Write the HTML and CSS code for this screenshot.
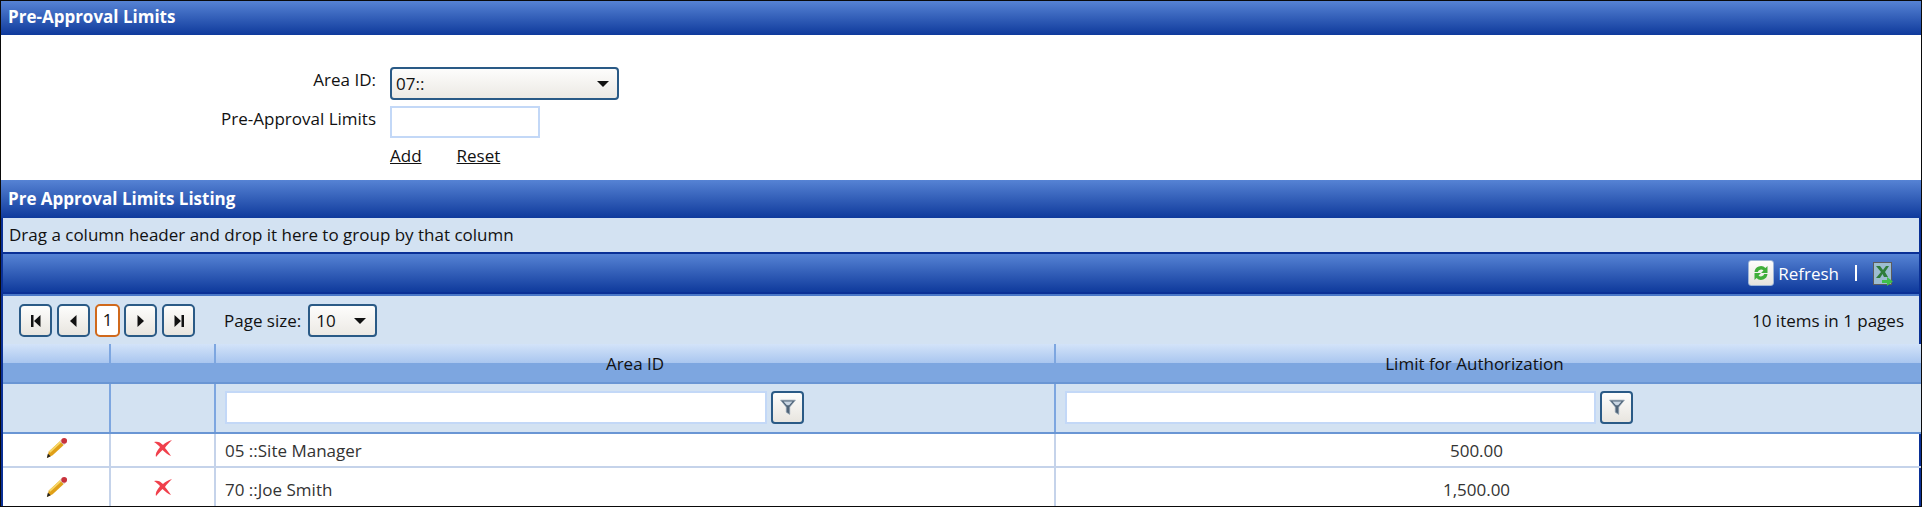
FILE: index.html
```html
<!DOCTYPE html>
<html lang="en">

<head>
    <meta charset="UTF-8">
    <title>Pre-Approval Limits</title>
    <link rel="stylesheet" href="styles.css">
</head>

<body>
    <div class="page-frame">
        <div class="title-bar">Pre-Approval Limits</div>

        <!-- Entry form -->
        <div class="limit-form">
            <label class="form-label form-label-area">Area ID:</label>
            <div class="fake-select form-select">
                <span>07::</span>
                <span class="select-arrow"></span>
            </div>
            <label class="form-label">Pre-Approval Limits</label>
            <input type="text" class="limit-input">
            <div class="form-links">
                <a href="#">Add</a>
                <a href="#">Reset</a>
            </div>
        </div>

        <div class="title-bar title-bar-listing">Pre Approval Limits Listing</div>

        <!-- Grid -->
        <div class="grid-wrap">
            <div class="group-panel">Drag a column header and drop it here to group by that column</div>
            <div class="grid-toolbar">
                <span class="refresh-icon">
                    <svg width="22" height="22" viewBox="0 0 22 22">
                        <path d="M4.500 10 A6.500 6.500 0 0 1 15.500 6 L17.500 4 V11 H11 L13.500 8.600 A3.400 3.400 0 0 0 7.800 10 Z" fill="#3fae3a"/>
                        <path d="M17.500 12 A6.500 6.500 0 0 1 6.500 16 L4.500 18 V11 H11 L8.500 13.400 A3.400 3.400 0 0 0 14.200 12 Z" fill="#3fae3a"/>
                    </svg>
                </span>
                <span class="refresh-text">Refresh</span>
                <span class="toolbar-sep"></span>
                <svg class="excel-icon" width="20" height="24" viewBox="0 0 20 24">
                    <rect x="0.500" y="0.500" width="18" height="22" fill="#9dbdd0" stroke="#5c5c5c"/>
                    <path d="M3 4 H7 L10 8 L13 4 H16 L12 10 L15 15 H11 L9.500 12 L7 16 H3 L8 10 Z" fill="#2f7d3a"/>
                    <path d="M9 18 H14 V15 L20 19.500 L14 24 V21 H9 Z" fill="#3fbf4a"/>
                </svg>
            </div>
            <div class="pager-row">
                <div class="pager-left">
                    <button class="pager-btn"><svg width="10" height="12" viewBox="0 0 10 12"><path d="M0 0H2.500V12H0Z M9.500 0V12L3 6Z" fill="#111"/></svg></button>
                    <button class="pager-btn"><svg width="7" height="12" viewBox="0 0 7 12"><path d="M6.500 0V12L0 6Z" fill="#111"/></svg></button>
                    <span class="pager-current">1</span>
                    <button class="pager-btn"><svg width="7" height="12" viewBox="0 0 7 12"><path d="M0.500 0V12L7 6Z" fill="#111"/></svg></button>
                    <button class="pager-btn"><svg width="10" height="12" viewBox="0 0 10 12"><path d="M0.500 0V12L7 6Z M7.500 0H10V12H7.500Z" fill="#111"/></svg></button>
                    <span class="page-size-label">Page size:</span>
                    <div class="fake-select page-size-select">
                        <span>10</span>
                        <span class="select-arrow"></span>
                    </div>
                </div>
                <div class="pager-info">10 items in 1 pages</div>
            </div>

            <table class="limits-table">
                <colgroup>
                    <col class="col-first">
                    <col class="col-action">
                    <col class="col-area">
                    <col>
                </colgroup>
                <thead>
                    <tr class="header-row">
                        <th></th>
                        <th></th>
                        <th>Area ID</th>
                        <th>Limit for Authorization</th>
                    </tr>
                    <tr class="filter-row">
                        <td></td>
                        <td></td>
                        <td>
                            <div class="filter-cell">
                                <input type="text" class="filter-input">
                                <button class="filter-btn"><svg width="16" height="16" viewBox="0 0 14 14"><path d="M0.500 1H13.500L8.500 7V13.500L5.500 11.500V7Z" fill="#4f6478" stroke="#8ea0b2" stroke-width="0.6"/><path d="M3 2.200H11L8 5.500H6Z" fill="#c9d6e3"/></svg></button>
                            </div>
                        </td>
                        <td>
                            <div class="filter-cell">
                                <input type="text" class="filter-input filter-input-limit">
                                <button class="filter-btn"><svg width="16" height="16" viewBox="0 0 14 14"><path d="M0.500 1H13.500L8.500 7V13.500L5.500 11.500V7Z" fill="#4f6478" stroke="#8ea0b2" stroke-width="0.6"/><path d="M3 2.200H11L8 5.500H6Z" fill="#c9d6e3"/></svg></button>
                            </div>
                        </td>
                    </tr>
                </thead>
                <tbody>
                    <tr class="row-first">
                        <td class="icon-cell">
                            <svg class="pencil-icon" width="23" height="23" viewBox="0 0 24 24">
                                <path d="M2 22 L4 15 L17 3 L21 7 L8 19 Z" fill="#e0a018"/>
                                <path d="M4 15 L17 3 L18.500 4.500 L5.500 16.500 Z" fill="#f7d768"/>
                                <path d="M2 22 L3 17.500 L6 20 Z" fill="#222"/>
                                <path d="M15.500 4.500 L17.500 2.500 L21.500 6.500 L19.500 8.500 Z" fill="#ddd"/>
                                <circle cx="20" cy="4" r="3" fill="#c8323c"/>
                            </svg>
                        </td>
                        <td class="icon-cell">
                            <svg class="delete-icon" width="20" height="20" viewBox="0 0 20 20">
                                <path d="M1 4 C5 3 7 4 10 7 C12 5 15 3 19 2 C16 5 13 8 12 10 C14 12 16 15 18 18 C15 17 12 14 9.500 12 C7 14 5 17 3 19 C2 15 5 12 7 9 C5 7 3 5 1 4 Z" fill="#f0404c"/>
                            </svg>
                        </td>
                        <td>05 ::Site Manager</td>
                        <td class="amount-cell">500.00</td>
                    </tr>
                    <tr class="row-second">
                        <td class="icon-cell">
                            <svg class="pencil-icon" width="23" height="23" viewBox="0 0 24 24">
                                <path d="M2 22 L4 15 L17 3 L21 7 L8 19 Z" fill="#e0a018"/>
                                <path d="M4 15 L17 3 L18.500 4.500 L5.500 16.500 Z" fill="#f7d768"/>
                                <path d="M2 22 L3 17.500 L6 20 Z" fill="#222"/>
                                <path d="M15.500 4.500 L17.500 2.500 L21.500 6.500 L19.500 8.500 Z" fill="#ddd"/>
                                <circle cx="20" cy="4" r="3" fill="#c8323c"/>
                            </svg>
                        </td>
                        <td class="icon-cell">
                            <svg class="delete-icon" width="20" height="20" viewBox="0 0 20 20">
                                <path d="M1 4 C5 3 7 4 10 7 C12 5 15 3 19 2 C16 5 13 8 12 10 C14 12 16 15 18 18 C15 17 12 14 9.500 12 C7 14 5 17 3 19 C2 15 5 12 7 9 C5 7 3 5 1 4 Z" fill="#f0404c"/>
                            </svg>
                        </td>
                        <td>70 ::Joe Smith</td>
                        <td class="amount-cell">1,500.00</td>
                    </tr>
                </tbody>
            </table>
        </div>
    </div>
</body>

</html>
```

FILE: styles.css
```css
* {
    box-sizing: border-box;
}

html,
body {
    margin: 0;
    padding: 0;
    background-color: #fff;
    overflow: hidden;
}

body {
    font-family: "Open Sans", "Noto Sans", sans-serif;
    font-size: 17px;
    color: #111;
}

.page-frame {
    width: 1922px;
    height: 507px;
    border: 1px solid #0a0a0a;
    overflow: hidden;
}

.title-bar {
    height: 34px;
    padding: 0 7px;
    line-height: 31px;
    font-weight: 700;
    color: #fff;
    background: linear-gradient(#5683d4, #0f3a9c);
}

.title-bar-listing {
    height: 38px;
    line-height: 37px;
}

.limit-form {
    height: 145px;
    padding: 32px 0 0 0;
    display: grid;
    grid-template-columns: 375px 229px;
    grid-template-rows: 33px 32px auto;
    column-gap: 14px;
    row-gap: 6px;
}

.form-label {
    text-align: right;
    line-height: 25px;
}

.form-label-area {
    line-height: 25px;
}

.fake-select {
    display: flex;
    align-items: center;
    justify-content: space-between;
    border: 2px solid #2a5a86;
    border-radius: 4px;
    background: linear-gradient(#fdfdfc, #ece9e4);
    padding: 0 8px 0 4px;
}

.select-arrow {
    width: 0;
    height: 0;
    border-left: 6px solid transparent;
    border-right: 6px solid transparent;
    border-top: 6px solid #111;
}

.limit-input {
    width: 150px;
    height: 32px;
    border: 2px solid #c3d8f7;
    background-color: #fff;
}

.form-links {
    grid-column: 2;
    display: flex;
    gap: 35px;
    padding-top: 0;
}

.form-links a {
    color: #111;
    text-decoration: underline;
}

.grid-wrap {
    border-left: 2px solid #0a3096;
    border-right: 2px solid #0a3096;
    height: 288px;
}

.group-panel {
    height: 34px;
    line-height: 34px;
    padding: 0 6px;
    background-color: #d3e2f2;
}

.grid-toolbar {
    height: 42px;
    border-top: 2px solid #0a3096;
    border-bottom: 2px solid #0a3096;
    background: linear-gradient(#5683d4, #0f3a9c);
    display: flex;
    align-items: center;
    justify-content: flex-end;
    padding-right: 26px;
    color: #fff;
}

.refresh-icon {
    width: 26px;
    height: 26px;
    border-radius: 3px;
    border: 1px solid #9db5d8;
    background: linear-gradient(#fdfdfc, #e6e3dd);
    display: flex;
    align-items: center;
    justify-content: center;
}

.refresh-text {
    margin-left: 4px;
}

.toolbar-sep {
    width: 2px;
    height: 16px;
    background-color: #fff;
    margin: 0 16px;
}

.excel-icon {
    margin-top: 2px;
}

.pager-row {
    height: 50px;
    padding: 1px 15px 0 16px;
    border-top: 2px solid #4a78c8;
    background-color: #d3e2f2;
    display: flex;
    align-items: center;
    justify-content: space-between;
}

.pager-left {
    display: flex;
    align-items: center;
}

.pager-btn {
    width: 33px;
    height: 33px;
    margin-right: 5px;
    padding: 0;
    border: 2px solid #2a5a86;
    border-radius: 5px;
    background: linear-gradient(#fdfdfc, #e8e5df);
    display: flex;
    align-items: center;
    justify-content: center;
}

.pager-current {
    width: 25px;
    height: 33px;
    margin-right: 4px;
    border: 2px solid #d0691c;
    border-radius: 5px;
    background-color: #fff;
    text-align: center;
    line-height: 28px;
}

.page-size-label {
    margin-left: 24px;
    margin-right: 7px;
}

.page-size-select {
    width: 69px;
    height: 33px;
    padding: 0 9px 0 6px;
}

.limits-table {
    width: calc(100% + 2px);
    border-collapse: collapse;
    table-layout: fixed;
}

.col-first {
    width: 107px;
}

.col-action {
    width: 105px;
}

.col-area {
    width: 840px;
}

.limits-table th,
.limits-table td {
    padding: 0 9px;
    border-right: 2px solid #7da6e0;
}

.limits-table th:last-child,
.limits-table td:last-child {
    border-right: none;
}

.limits-table .header-row th:last-child {
    padding-right: 37px;
}

.limits-table tbody .amount-cell {
    padding-right: 33px;
}

.header-row th {
    height: 39px;
    font-weight: 400;
    background: linear-gradient(#d3e3f9 0, #a9c6ef 50%, #7da6e0 50%, #7da6e0 100%);
    border-bottom: 2px solid #6a96d4;
}

.filter-row td {
    height: 50px;
    padding-bottom: 2px;
    background-color: #d3e2f2;
    border-bottom: 2px solid #6a96d4;
}

.filter-cell {
    display: flex;
    align-items: center;
    gap: 4px;
}

.filter-input {
    width: 542px;
    height: 33px;
    border: 2px solid #c3d8f7;
    background-color: #fff;
}

.filter-input-limit {
    width: 531px;
}

.filter-btn {
    width: 33px;
    height: 33px;
    padding: 0;
    border: 2px solid #2a5a86;
    border-radius: 4px;
    background: linear-gradient(#fdfdfc, #e8e5df);
    display: flex;
    align-items: center;
    justify-content: center;
}

.limits-table tbody td {
    border-right-color: #c5d3ea;
    border-bottom: 2px solid #c5d3ea;
    color: #333;
}

.row-first td {
    height: 34px;
}

.row-second td {
    height: 44px;
}

.icon-cell,
.amount-cell {
    text-align: center;
}

.icon-cell svg {
    display: block;
    margin: -4px auto 0;
}
```
